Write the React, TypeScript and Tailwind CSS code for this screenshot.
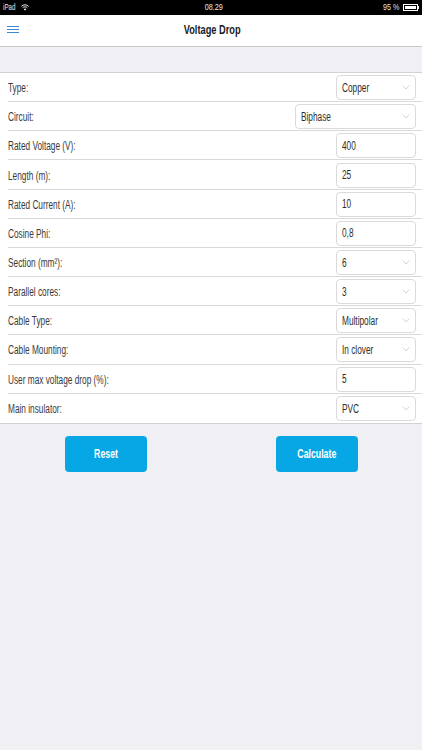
import React from "react";

const F = { fontFamily: '"Liberation Sans", Arial, Helvetica, sans-serif' };

function T({ children, className = "" }: { children: React.ReactNode; className?: string }) {
  return (
    <span className={"inline-block origin-left scale-x-[0.69] whitespace-nowrap " + className}>{children}</span>
  );
}

function Chevron() {
  return (
    <svg width="8" height="5" viewBox="0 0 8 5" className="shrink-0">
      <polyline points="0.8,0.6 4,4 7.2,0.6" fill="none" stroke="#c8c8c8" strokeWidth="0.8" />
    </svg>
  );
}

type Row = { label: React.ReactNode; value: string; select?: boolean; wide?: boolean };

const rows: Row[] = [
  { label: "Type:", value: "Copper", select: true },
  { label: "Circuit:", value: "Biphase", select: true, wide: true },
  { label: "Rated Voltage (V):", value: "400" },
  { label: "Length (m):", value: "25" },
  { label: "Rated Current (A):", value: "10" },
  { label: "Cosine Phi:", value: "0,8" },
  { label: "Section (mm²):", value: "6", select: true },
  { label: "Parallel cores:", value: "3", select: true },
  { label: "Cable Type:", value: "Multipolar", select: true },
  { label: "Cable Mounting:", value: "In clover", select: true },
  { label: "User max voltage drop (%):", value: "5" },
  { label: "Main insulator:", value: "PVC", select: true },
];

export default function App() {
  return (
    <div className="w-[422px] h-[750px] bg-[#efeff4] overflow-hidden" style={F}>
      {/* status bar */}
      <div className="h-[15px] bg-black text-[#e8e8e8] text-[9px] leading-[15px] flex items-center justify-between px-[3px] relative">
        <div className="flex items-center gap-[3px]">
          <T className="scale-x-[0.8]">iPad</T>
          <svg width="8" height="7" viewBox="0 0 8 7" className="-ml-[3px]">
            <path d="M0.3 2.4 A5 5 0 0 1 7.7 2.4" fill="none" stroke="#fff" strokeWidth="0.9" />
            <path d="M1.6 3.9 A3.2 3.2 0 0 1 6.4 3.9" fill="none" stroke="#fff" strokeWidth="0.9" />
            <path d="M4 6.6 L2.8 5.3 A1.6 1.6 0 0 1 5.2 5.3 Z" fill="#fff" />
          </svg>
        </div>
        <div className="absolute left-0 right-0 top-0 flex justify-center">
          <span className="inline-block scale-x-[0.8] pl-[6px]">08.29</span>
        </div>
        <div className="flex items-center gap-[3px]">
          <span className="inline-block origin-right scale-x-[0.8] text-[#e0e0e0]">95 %</span>
          <div className="flex items-center">
            <div className="w-[15px] h-[7px] border border-white p-[1px]">
              <div className="w-full h-full bg-white" />
            </div>
            <div className="w-[1px] h-[3px] bg-white" />
          </div>
        </div>
      </div>

      {/* nav bar */}
      <div className="h-[32px] bg-white border-b border-[#c9c9cc] flex items-center relative">
        <div className="absolute left-[7px] top-[11px] flex flex-col gap-[1.6px]">
          <div className="w-[12px] h-[1.3px] bg-[#3d87d9]" />
          <div className="w-[12px] h-[1.3px] bg-[#3d87d9]" />
          <div className="w-[12px] h-[1.3px] bg-[#3d87d9]" />
        </div>
        <div className="flex-1 flex justify-center">
          <span className="inline-block scale-x-[0.74] text-[12.5px] font-bold text-[#1a1a1a] pl-[2px]">Voltage Drop</span>
        </div>
      </div>

      {/* gray band */}
      <div className="h-[25px]" />

      {/* list */}
      <div className="bg-white border-t border-b border-[#d2d2d6]">
        {rows.map((r, i) => (
          <div key={i} className="pl-[8px]">
            <div
              className={
                "h-[29.17px] flex items-center justify-between pr-[6px] " +
                (i < rows.length - 1 ? "border-b border-[#d9d9dd]" : "")
              }
            >
              <T className="text-[12px] text-[#3a3a3a] pt-[2px]">{r.label}</T>
              <div
                className={
                  (r.wide ? "w-[121px]" : "w-[80px]") +
                  " h-[25px] mt-[1px] border border-[#dadada] rounded-[4px] bg-white flex items-center justify-between pl-[5px] pr-[5px]"
                }
              >
                <T className="text-[12px] text-[#2e2e2e]">{r.value}</T>
                {r.select && <Chevron />}
              </div>
            </div>
          </div>
        ))}
      </div>

      {/* buttons */}
      <div className="grid grid-cols-2 mt-[12px]">
        <div className="flex justify-center pl-[1px]">
          <button className="w-[82px] h-[36px] rounded-[4px] bg-[#07a7e6] text-white flex items-center justify-center">
            <span className="inline-block scale-x-[0.7] text-[12.5px] font-bold">Reset</span>
          </button>
        </div>
        <div className="flex justify-center">
          <button className="w-[82px] h-[36px] rounded-[4px] bg-[#07a7e6] text-white flex items-center justify-center">
            <span className="inline-block scale-x-[0.7] text-[12.5px] font-bold">Calculate</span>
          </button>
        </div>
      </div>
    </div>
  );
}
